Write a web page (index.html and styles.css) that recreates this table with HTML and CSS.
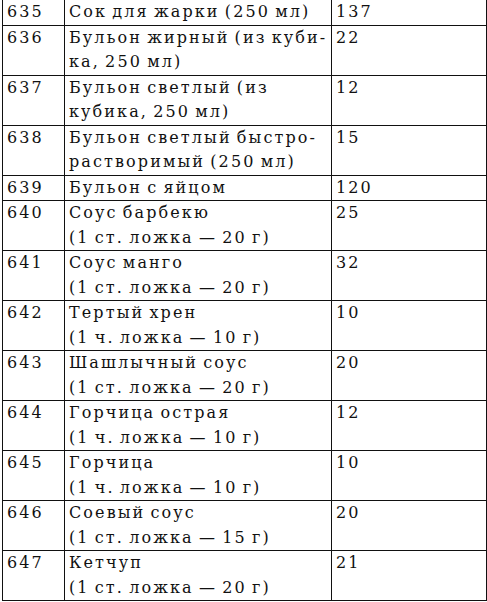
FILE: index.html
```html
<!DOCTYPE html>
<html lang="ru">
<head>
<meta charset="utf-8">
<link rel="stylesheet" href="styles.css">
</head>
<body>
<table class="tbl">
<colgroup><col class="c1"><col class="c2"><col class="c3"></colgroup>
<tr><td>635</td><td>Сок для жарки (250 мл)</td><td>137</td></tr>
<tr><td>636</td><td>Бульон жирный (из куби-<br>ка, 250 мл)</td><td>22</td></tr>
<tr><td>637</td><td>Бульон светлый (из<br>кубика, 250 мл)</td><td>12</td></tr>
<tr><td>638</td><td>Бульон светлый быстро-<br>растворимый (250 мл)</td><td>15</td></tr>
<tr><td>639</td><td>Бульон с яйцом</td><td>120</td></tr>
<tr><td>640</td><td>Соус барбекю<br>(1 ст. ложка — 20 г)</td><td>25</td></tr>
<tr><td>641</td><td>Соус манго<br>(1 ст. ложка — 20 г)</td><td>32</td></tr>
<tr><td>642</td><td>Тертый хрен<br>(1 ч. ложка — 10 г)</td><td>10</td></tr>
<tr><td>643</td><td>Шашлычный соус<br>(1 ст. ложка — 20 г)</td><td>20</td></tr>
<tr><td>644</td><td>Горчица острая<br>(1 ч. ложка — 10 г)</td><td>12</td></tr>
<tr><td>645</td><td>Горчица<br>(1 ч. ложка — 10 г)</td><td>10</td></tr>
<tr><td>646</td><td>Соевый соус<br>(1 ст. ложка — 15 г)</td><td>20</td></tr>
<tr><td>647</td><td>Кетчуп<br>(1 ст. ложка — 20 г)</td><td>21</td></tr>
</table>
</body>
</html>
```
FILE: styles.css
```css
html, body {
  margin: 0;
  padding: 0;
  background: #fff;
}
body {
  padding: 0 0 0 2px;
}
.tbl {
  margin-top: -1px;
  border-collapse: collapse;
  table-layout: fixed;
  width: 484px;
  font-family: "DejaVu Serif", "Noto Serif", serif;
  font-size: 16px;
  letter-spacing: 2.1px;
  word-spacing: -2px;
  line-height: 24.5px;
  color: #111;
}
.c1 { width: 62px; }
.c2 { width: 267px; }
.c3 { width: 155px; }
.tbl td {
  border: 1px solid #111;
  padding: 0 0 0 4px;
  vertical-align: top;
  white-space: nowrap;
}
```
